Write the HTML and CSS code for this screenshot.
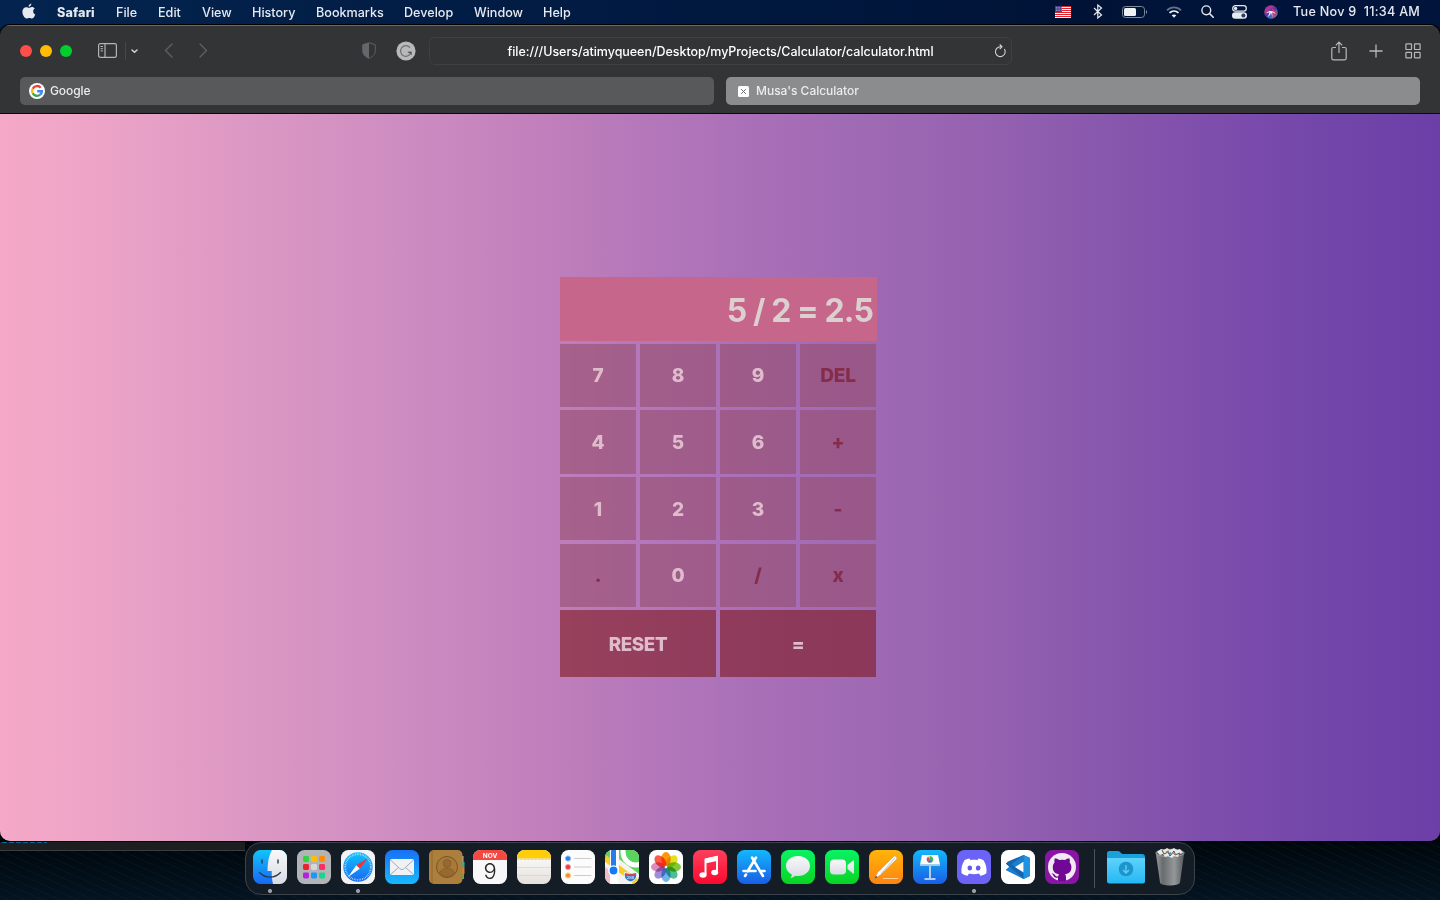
FILE: index.html
```html
<!DOCTYPE html>
<html lang="en">
<head>
<meta charset="utf-8">
<title>Musa's Calculator</title>
<link rel="stylesheet" href="styles.css">
</head>
<body>
<div class="desktop">
  <header class="menubar">
    <svg class="apple" width="14" height="18" viewBox="0 0 14 18"><path d="M9.3.4C9.5 2 8.1 3.8 6.6 3.8 6.4 2.3 7.7.7 9.3.4zM6.9 4.9c.8 0 1.7-.8 3-.8 1.2 0 2.3.6 2.9 1.5-2.4 1.4-2 4.9.5 5.9-.6 1.7-1.9 4-3.2 4-1 0-1.5-.6-2.8-.6s-1.8.6-2.8.6C2.700 15.500.4 12 .4 8.800.4 5.900 2.200 4.200 4.200 4.200c1.200 0 2.100.7 2.700.7z" fill="#e6eaf0"/></svg>
    <nav class="menus">
      <span class="app">Safari</span><span>File</span><span>Edit</span><span>View</span><span>History</span><span>Bookmarks</span><span>Develop</span><span>Window</span><span>Help</span>
    </nav>
    <div class="status">
      <svg width="16" height="12" viewBox="0 0 16 12"><path fill="#fff" d="M0 0h16v12H0z"/><path d="M0 .5h16M0 2.500h16M0 4.500h16M0 6.500h16M0 8.500h16M0 10.500h16" stroke="#dc2430" stroke-width="1.100"/><path fill="#43438b" d="M0 0h7v6H0z"/><path d="M1 1.500h6M1 3h6M1 4.500h6" stroke="#d5d5ef" stroke-width=".7" stroke-dasharray=".7 1"/></svg>
      <svg width="10" height="15" viewBox="0 0 10 15"><path d="M1 4l7.500 7-3.700 3V1l3.700 3L1 11" fill="none" stroke="#e6eaf0" stroke-width="1.200"/></svg>
      <svg width="26" height="12" viewBox="0 0 26 12"><rect x=".5" y=".5" width="22" height="11" rx="3" fill="none" stroke="#7d889c"/><rect x="2" y="2" width="12" height="8" rx="1.500" fill="#f0f2f5"/><path d="M24 4c1.600.6 1.600 3.400 0 4z" fill="#7d889c"/></svg>
      <svg width="16" height="12" viewBox="0 0 16 12"><path d="M1 4.300c4-4 10-4 14 0" fill="none" stroke="#63708a" stroke-width="1.800"/><path d="M3.500 6.900c2.600-2.500 6.400-2.500 9 0" fill="none" stroke="#f0f2f5" stroke-width="1.800"/><path d="M8 11.700 5.700 9.300c1.300-1.200 3.300-1.200 4.600 0z" fill="#f0f2f5"/></svg>
      <svg width="13" height="13" viewBox="0 0 13 13"><circle cx="5.300" cy="5.300" r="4.400" fill="none" stroke="#e6eaf0" stroke-width="1.400"/><path d="M8.500 8.500l3.700 3.700" stroke="#e6eaf0" stroke-width="1.600" stroke-linecap="round"/></svg>
      <svg width="15" height="14" viewBox="0 0 15 14"><rect x=".7" y=".7" width="13.600" height="5.400" rx="2.700" fill="none" stroke="#e6eaf0" stroke-width="1.200"/><circle cx="3.600" cy="3.400" r="1.700" fill="#e6eaf0"/><rect y="7.300" width="15" height="6.500" rx="3.250" fill="#e6eaf0"/><circle cx="11.400" cy="10.500" r="2" fill="#2b3e62"/></svg>
      <svg width="14" height="14" viewBox="0 0 14 14"><defs><linearGradient id="siri" x2=".8" y2="1"><stop stop-color="#244bb5"/><stop offset=".3" stop-color="#c2338f"/><stop offset=".55" stop-color="#4a3aa8"/><stop offset="1" stop-color="#18b2d8"/></linearGradient></defs><circle cx="7" cy="7" r="6.800" fill="url(#siri)"/><path d="M8 3.500c3 .5 4 3 5.300 4.500-.8 3-3 5-5 5.400z" fill="#e0355f" opacity=".75"/><path d="M1.500 8.500c2.500-2 3.500-2.500 5-2.500 1.500-.2 4 .3 5 3-2-1.200-2.500-1.500-3.500-1.500.5 1.500.5 3 .2 4.500C8 10.500 7.500 9 7 8c-.5 1.500-1.500 3-3.500 4 1-1.500 1.700-3 2-4.500-1 0-2 .2-4 1z" fill="#fff" opacity=".9"/></svg>
      <time>Tue Nov 9&nbsp; 11:34 AM</time>
    </div>
  </header>

  <main class="window">
    <div class="toolbar">
      <div class="tools-left">
        <div class="lights"><i class="red"></i><i class="yellow"></i><i class="green"></i></div>
        <svg width="19" height="15" viewBox="0 0 19 15"><rect x=".6" y=".6" width="17.800" height="13.800" rx="1.700" fill="none" stroke="#b3b4b5" stroke-width="1.200"/><path d="M7 1v13" stroke="#b3b4b5" stroke-width="1.200"/><path d="M2.500 3.500h2.500M2.500 5.700h2.500M2.500 7.900h2.500" stroke="#b3b4b5"/></svg>
        <i class="rule"></i>
        <svg class="down" width="7" height="5" viewBox="0 0 7 5"><path d="M1 1l2.500 2.300L6 1" fill="none" stroke="#d2d2d3" stroke-width="1.500" stroke-linecap="round"/></svg>
        <svg class="back" width="9" height="15" viewBox="0 0 9 15"><path d="M8 1L1.500 7.500 8 14" fill="none" stroke="#606163" stroke-width="1.300" stroke-linecap="round"/></svg>
        <svg class="fwd" width="9" height="15" viewBox="0 0 9 15"><path d="M1 1l6.500 6.500L1 14" fill="none" stroke="#606163" stroke-width="1.300" stroke-linecap="round"/></svg>
      </div>
      <div class="privacy">
        <svg width="14" height="17" viewBox="0 0 14 17"><path d="M7 .7l6.300 2v6c0 4-2.500 6-6.300 7.600C3.200 14.700.7 12.700.7 8.700v-6z" fill="none" stroke="#5e5f61"/><path d="M7 .7v15.600C3.200 14.700.7 12.700.7 8.700v-6z" fill="#66676a"/></svg>
        <svg width="20" height="20" viewBox="0 0 20 20"><circle cx="10" cy="10" r="9.600" fill="#b9b9ba"/><path d="M14 6.600A5.300 5.300 0 1 0 15 11.400h-3.200" fill="none" stroke="#707172" stroke-width="1.200"/><path d="M12 10.800h3.600v3.500z" fill="#555657"/></svg>
      </div>
      <div class="address"><span>file:///Users/atimyqueen/Desktop/myProjects/Calculator/calculator.html</span>
        <svg class="reload" width="13" height="14" viewBox="0 0 13 14"><path d="M10.400 5A4.900 4.900 0 1 1 6.300 2.800h1.500M5.700.5L8 2.800 5.700 5.200" fill="none" stroke="#d2d3d3" stroke-width="1.100"/></svg>
      </div>
      <div class="tools-right">
        <svg width="16" height="20" viewBox="0 0 16 20"><path d="M5 6.500H2.300A1.500 1.500 0 0 0 .8 8v9.300a1.500 1.500 0 0 0 1.500 1.500h11.400a1.500 1.500 0 0 0 1.500-1.500V8a1.500 1.500 0 0 0-1.500-1.500H11M8 12V1.200M4.800 4.300L8 1.100l3.200 3.200" fill="none" stroke="#b7b8b9" stroke-width="1.200"/></svg>
        <svg width="14" height="14" viewBox="0 0 14 14"><path d="M7 .5v13M.5 7h13" stroke="#b7b8b9" stroke-width="1.300"/></svg>
        <svg width="16" height="16" viewBox="0 0 16 16"><g fill="none" stroke="#b7b8b9" stroke-width="1.200"><rect x=".9" y=".9" width="5.600" height="5.600" rx=".6"/><rect x="9.500" y=".9" width="5.600" height="5.600" rx=".6"/><rect x=".9" y="9.300" width="5.600" height="5.600" rx=".6"/><rect x="9.500" y="9.300" width="5.600" height="5.600" rx=".6"/></g></svg>
      </div>
    </div>
    <div class="tabs">
      <div class="tab"><svg width="16" height="16" viewBox="0 0 16 16"><circle cx="8" cy="8" r="8" fill="#fff"/><g fill="none" stroke-width="2.400"><path d="M11.700 4.700A4.900 4.900 0 0 0 3.700 5.700" stroke="#ea4335"/><path d="M3.700 5.700a4.900 4.900 0 0 0 0 4.600" stroke="#fbbc05"/><path d="M3.700 10.300a4.900 4.900 0 0 0 7.500 1.400" stroke="#34a853"/><path d="M11.200 11.700A4.900 4.900 0 0 0 12.900 8.200H8.200" stroke="#4285f4"/></g></svg><span>Google</span></div>
      <div class="tab active"><svg width="11" height="11" viewBox="0 0 11 11"><rect width="11" height="11" rx="1.500" fill="#fff"/><path d="M3.200 3.200l4.600 4.600m0-4.600L3.200 7.800" stroke="#68696a"/></svg><span>Musa's Calculator</span></div>
    </div>
    <section class="page">
      <div class="calculator">
        <output class="display">5 / 2 = 2.5</output>
        <div class="keys">
          <button>7</button><button>8</button><button>9</button><button class="op">DEL</button>
          <button>4</button><button>5</button><button>6</button><button class="op">+</button>
          <button>1</button><button>2</button><button>3</button><button class="op">-</button>
          <button class="op">.</button><button>0</button><button class="op">/</button><button class="op">x</button>
          <button class="wide">RESET</button><button class="wide">=</button>
        </div>
      </div>
    </section>
  </main>

  <div class="shelf">
    <div class="behind"><i></i></div>
    <footer class="dock">
      <svg class="open" viewBox="0 0 34 34"><defs><linearGradient id="fb" x2="0" y2="1"><stop stop-color="#12c3fb"/><stop offset="1" stop-color="#1768f4"/></linearGradient><linearGradient id="lt" x2="0" y2="1"><stop stop-color="#f8f8fa"/><stop offset="1" stop-color="#dadce4"/></linearGradient></defs><rect width="34" height="34" rx="7.500" fill="url(#fb)"/><path d="M19 0h7.500A7.500 7.500 0 0 1 34 7.500v19a7.500 7.500 0 0 1-7.500 7.500H20c-1-4-1.400-8-1.300-13H14.500C14.700 12 16 5 19 0z" fill="url(#lt)"/><path d="M9 10v3M25 10v3" stroke="#27374c" stroke-width="1.400" stroke-linecap="round"/><path d="M6.500 22.500c6 6.200 15 6.200 21 0" fill="none" stroke="#26364b" stroke-width="1.300" stroke-linecap="round"/></svg>
      <svg viewBox="0 0 34 34"><rect width="34" height="34" rx="7.500" fill="#b3b4b8"/><g><rect x="6" y="6" width="6" height="6" rx="1.400" fill="#30d63a"/><rect x="14" y="6" width="6" height="6" rx="1.400" fill="#ffbd05"/><rect x="22" y="6" width="6" height="6" rx="1.400" fill="#fd8d07"/><rect x="6" y="14" width="6" height="6" rx="1.400" fill="#e92430"/><rect x="14" y="14" width="6" height="6" rx="1.400" fill="#d5d8dc"/><rect x="22" y="14" width="6" height="6" rx="1.400" fill="#fa2f61"/><rect x="6" y="22.500" width="6" height="6" rx="1.400" fill="#b025db"/><rect x="14" y="22.500" width="6" height="6" rx="1.400" fill="#1898fa"/><rect x="22" y="22.500" width="6" height="6" rx="1.400" fill="#18d58e"/></g></svg>
      <svg class="open" viewBox="0 0 34 34"><rect width="34" height="34" rx="7.500" fill="#f3f3f5"/><circle cx="17" cy="17" r="14.700" fill="url(#fb)"/><circle cx="17" cy="17" r="12.800" fill="none" stroke="#d3eeff" stroke-width="1.800" stroke-dasharray=".6 1.080"/><path d="M27 8L15.300 15.200l3.500 3.600z" fill="#ee3437"/><path d="M7 27l8.300-11.800 3.500 3.600z" fill="#f7f8fa"/></svg>
      <svg viewBox="0 0 34 34"><defs><linearGradient id="ml" x2="0" y2="1"><stop stop-color="#1870f4"/><stop offset="1" stop-color="#17baff"/></linearGradient></defs><rect width="34" height="34" rx="7.500" fill="url(#ml)"/><rect x="5" y="9" width="24" height="16" rx="1.800" fill="#eff1f5"/><path d="M5.500 10l9.200 8.500c1.500 1.400 3.100 1.400 4.600 0L28.500 10M5.500 24.500l8-7M28.500 24.500l-8-7" fill="none" stroke="#a1aab4" stroke-width="1"/></svg>
      <svg viewBox="0 0 34 34"><path d="M31 6h3.500v6H31z" fill="#a7b4aa"/><path d="M31 12h4.500v6H31z" fill="#2ab1a8"/><path d="M31 18h4.500v6H31z" fill="#e47d29"/><path d="M31 24h4v5h-4z" fill="#50ad61"/><rect width="33.500" height="34" rx="5" fill="#ad7f3c"/><path d="M3 1v32" stroke="#876027" stroke-width=".7"/><circle cx="18" cy="17" r="10.500" fill="#a97938" stroke="#78562b"/><circle cx="18" cy="13.500" r="3.900" fill="#98692e" stroke="#78562b" stroke-width=".6"/><path d="M10.500 23c2-6.500 13-6.500 15 0-4 5-11 5-15 0z" fill="#98692e" stroke="#78562b" stroke-width=".6"/></svg>
      <div class="calendar"><b>NOV</b><span>9</span></div>
      <svg viewBox="0 0 34 34"><defs><linearGradient id="paper" x2="0" y2="1"><stop stop-color="#fff"/><stop offset="1" stop-color="#e4e0da"/></linearGradient></defs><rect width="34" height="34" rx="7.500" fill="url(#paper)"/><path d="M0 8.500v-1A7.500 7.500 0 0 1 7.500 0h19A7.500 7.500 0 0 1 34 7.500v1z" fill="#ffce08"/><path d="M0 9.200h34" stroke="#b7af9b" stroke-dasharray=".7 .7"/><path d="M0 17.500h34M0 25.500h34" stroke="#cbc9c6" stroke-width=".5"/></svg>
      <svg viewBox="0 0 34 34"><rect width="34" height="34" rx="7.500" fill="#fcfcfc"/><g stroke-width="1"><circle cx="7" cy="8.500" r="2.600" fill="#237ff3" stroke="#8bbdf8"/><circle cx="7" cy="17" r="2.600" fill="#ee3b42" stroke="#f69ca0"/><circle cx="7" cy="25.500" r="2.600" fill="#f69326" stroke="#fac997"/></g><path d="M13 8.500h17.500M13 17h17.500M13 25.500h17.500" stroke="#b5b7ba" stroke-width=".7"/></svg>
      <svg viewBox="0 0 34 34"><defs><clipPath id="round"><rect width="34" height="34" rx="7.500"/></clipPath></defs><g clip-path="url(#round)"><path fill="#f5f3ee" d="M0 0h34v34H0z"/><path fill="#5bd35f" d="M14 0h20v24L14 9zM0 0h5v13L0 10z"/><path d="M0 8l34 26" stroke="#fdcb28" stroke-width="6"/><path d="M0 17l13 9v8H0z" fill="#f5b8c6"/><circle cx="31" cy="2" r="13" fill="none" stroke="#fff" stroke-width="5"/><path d="M13 0v34" stroke="#f9f9f9" stroke-width="2"/><path d="M8.500 0v34" stroke="#fff" stroke-width="7"/><path d="M8.500 0v20" stroke="#287ce9" stroke-width="5"/><circle cx="8.500" cy="20.500" r="5.300" fill="#fff"/><circle cx="8.500" cy="20.500" r="3.900" fill="#147bf4"/><path d="M19.500 22.500c3 1 9 1 12 0 1 5-1 8-6 9.500-5-1.500-7-4.500-6-9.500z" fill="#357ac7" stroke="#f6f6f6"/><path d="M20 23.500c3 1 8 1 11 0v2H20z" fill="#de4047"/><text x="25.500" y="29" text-anchor="middle" font-size="4" fill="#fff">280</text></g></svg>
      <svg viewBox="0 0 34 34"><rect width="34" height="34" rx="7.500" fill="#fff"/><g class="petals"><ellipse cx="17" cy="9" rx="4.700" ry="7" fill="#ff9708"/><ellipse cx="17" cy="9" rx="4.700" ry="7" fill="#e3df1c" transform="rotate(45 17 17)"/><ellipse cx="17" cy="9" rx="4.700" ry="7" fill="#80c93a" transform="rotate(90 17 17)"/><ellipse cx="17" cy="9" rx="4.700" ry="7" fill="#4fbf92" transform="rotate(135 17 17)"/><ellipse cx="17" cy="9" rx="4.700" ry="7" fill="#6db5ea" transform="rotate(180 17 17)"/><ellipse cx="17" cy="9" rx="4.700" ry="7" fill="#a08fd6" transform="rotate(225 17 17)"/><ellipse cx="17" cy="9" rx="4.700" ry="7" fill="#e08bbd" transform="rotate(270 17 17)"/><ellipse cx="17" cy="9" rx="4.700" ry="7" fill="#fb5a45" transform="rotate(315 17 17)"/></g></svg>
      <svg viewBox="0 0 34 34"><defs><linearGradient id="mu" x2="0" y2="1"><stop stop-color="#fb405e"/><stop offset="1" stop-color="#fb092e"/></linearGradient></defs><rect width="34" height="34" rx="7.500" fill="url(#mu)"/><path d="M12.500 24.500V9.500L24 7v15" fill="none" stroke="#fff" stroke-width="2"/><path d="M12 8.500L25 5.700v5L12 13.500z" fill="#fff"/><ellipse cx="10" cy="25" rx="3.600" ry="2.700" fill="#fff"/><ellipse cx="21.700" cy="22.500" rx="3.500" ry="2.700" fill="#fff"/></svg>
      <svg viewBox="0 0 34 34"><defs><linearGradient id="as" x2="0" y2="1"><stop stop-color="#13b8fb"/><stop offset="1" stop-color="#1a5de5"/></linearGradient></defs><rect width="34" height="34" rx="7.500" fill="url(#as)"/><path d="M15 7.500L26 26M19 7.500L10.500 21.500M6.500 21h12M23.500 21h4M9 24.500l-1 1.500" stroke="#fff" stroke-width="2.600" stroke-linecap="round"/></svg>
      <svg viewBox="0 0 34 34"><defs><linearGradient id="gr" x2="0" y2="1"><stop stop-color="#09f365"/><stop offset="1" stop-color="#08d422"/></linearGradient></defs><rect width="34" height="34" rx="7.500" fill="url(#gr)"/><path d="M17 6c7 0 12 4.400 12 10s-5 10-12 10c-1 0-2-.1-3-.3-1.200 1.400-3 2.100-4.700 2.100 1.100-1 1.500-2.100 1.500-3.300C7.300 22.700 5 19.700 5 16 5 10.400 10 6 17 6z" fill="url(#lt)"/></svg>
      <svg viewBox="0 0 34 34"><rect width="34" height="34" rx="7.500" fill="url(#gr)"/><rect x="5" y="9.500" width="16" height="15" rx="4" fill="url(#lt)"/><path d="M22.500 15l5.500-4.500q1-.6 1 .7v11.600q0 1.300-1 .7L22.500 19z" fill="url(#lt)"/></svg>
      <svg viewBox="0 0 34 34"><defs><linearGradient id="or" x2="0" y2="1"><stop stop-color="#ffb408"/><stop offset="1" stop-color="#ff8412"/></linearGradient></defs><rect width="34" height="34" rx="7.500" fill="url(#or)"/><path d="M5.500 28.800l3-6.300L24.500 6.500c1.500-1.500 4.500.8 3 3L11.500 25z" fill="#f8f8f6" stroke="#b9956b" stroke-width=".6"/><path d="M5.500 28.800l1.500-3 1.500 1.500z" fill="#574b44"/><path d="M12 24L26 8" stroke="#aaa6a0" stroke-width=".6"/><path d="M14 28.500h15" stroke="#ffd29b"/></svg>
      <svg viewBox="0 0 34 34"><rect width="34" height="34" rx="7.500" fill="url(#as)"/><path d="M9 5h16l2 9.500H7z" fill="#f9fbfd"/><path d="M7 14.500h20v1.300H7z" fill="#c9d5e3"/><path d="M17 16v12" stroke="#dae6f2" stroke-width="1.600"/><path d="M11.500 29h11" stroke="#f3f6f9" stroke-width="1.400"/><circle cx="17" cy="9.500" r="3.200" fill="#f7b42d"/><path d="M17 9.500V6.300a3.200 3.200 0 0 1 2.800 4.800z" fill="#30bd63"/><path d="M17 9.500l2.800 1.600a3.200 3.200 0 0 1-5.500.1z" fill="#347ded"/><path d="M17 9.500l-2.700 1.700A3.200 3.200 0 0 1 15 7z" fill="#ed454a"/></svg>
      <svg class="open" viewBox="0 0 34 34"><rect width="34" height="34" rx="7.500" fill="#6a63f5"/><path d="M12.500 8.500c-2 .3-4 1-5 1.700C5 14 4 18 4.600 23.300c2 1.500 4 2.300 6 2.500l1.400-2.200c3.300 1 6.700 1 10 0l1.400 2.200c2-.2 4-1 6-2.500C30 18 29 14 26.500 10.200c-1-.7-3-1.400-5-1.700l-.8 1.500c-2.400-.4-5-.4-7.400 0z" fill="#fff"/><ellipse cx="12.800" cy="18" rx="2.300" ry="2.600" fill="#625bed"/><ellipse cx="21.200" cy="18" rx="2.300" ry="2.600" fill="#625bed"/></svg>
      <svg viewBox="0 0 34 34"><rect width="34" height="34" rx="7.500" fill="#fff"/><path d="M22.500 5L29 8v18l-6.500 3L5 13.800 7 11.500z" fill="#1764ad"/><path d="M22.500 29L5 20.200v-1.500L22.500 5z" fill="#1b7fd0"/><path d="M5 13.800L7 11.800 23 23.500V29z" fill="#1564ae"/><path d="M8 17l-3-2.500v5z" fill="#fff"/><path d="M22.800 11.500L14 17l8.800 5.500z" fill="#fff"/><path d="M22.500 5l6.500 3v18l-6.500 3z" fill="#2191e2"/></svg>
      <svg viewBox="0 0 34 34"><rect width="34" height="34" rx="7.500" fill="#8914a6"/><circle cx="17" cy="17" r="14" fill="#f0eaf3"/><path d="M13 31v-3.500c-3 .7-4-.8-4.800-2.300-.4-.8-1-1.200-1.700-1.500 2-.7 3 .7 3.700 1.700.9 1.200 1.900 1.300 3 .8.1-.9.500-1.600 1-2-4-.5-6.400-2.500-6.400-7 0-2 .7-3.500 1.700-4.600-.3-1.500-.2-3 .3-4.300 1.600 0 3 .8 4.300 1.700a14 14 0 0 1 6 0c1.300-.9 2.700-1.700 4.300-1.700.5 1.300.6 2.800.3 4.300 1 1.100 1.700 2.600 1.700 4.600 0 4.500-2.500 6.500-6.500 7 .8.700 1.100 1.700 1.100 3V31z" fill="#710795"/></svg>
      <i class="divider"></i>
      <svg class="folder" viewBox="0 0 40 34"><defs><linearGradient id="fd" x2="0" y2="1"><stop stop-color="#60d2fb"/><stop offset="1" stop-color="#23b8f5"/></linearGradient></defs><path d="M1 3.500Q1 1 3.500 1H12q1.500 0 3 2l1.500 1H36q3 0 3 3v23H1z" fill="#19a1dd"/><path d="M1 8h38v23q0 2.500-2.500 2.500h-33Q1 33.500 1 31z" fill="url(#fd)"/><circle cx="20" cy="19" r="7.300" fill="#1c94cc"/><path d="M20 15v8m-3-3l3 3 3-3" fill="none" stroke="#65d0f6" stroke-width="1.300"/></svg>
      <svg class="trash" viewBox="0 0 30 38"><defs><linearGradient id="tr"><stop stop-color="#96999a"/><stop offset=".25" stop-color="#686c6e"/><stop offset=".65" stop-color="#94989a"/><stop offset="1" stop-color="#56595b"/></linearGradient></defs><path d="M.8 5L5 34.500c.4 4 19.600 4 20 0L29.200 5z" fill="url(#tr)"/><ellipse cx="15" cy="5" rx="14.200" ry="3.700" fill="#54585a" stroke="#9ca0a1"/><path d="M2 4l4-3 3 1 3-2 3 2 4-2 3 2 3-1 3 4-4 1-1 3-4-1-2 2-4-2-3 1-2-3-3 1z" fill="#e8eae9"/><path d="M7 2l2 4 4-2 2 4 4-5 1 4 5-2" fill="none" stroke="#444b50"/><path d="M11 4l3-1M18 5l3 1" stroke="#e17d32" stroke-width="1.500"/><path d="M14 6l2-1" stroke="#2498d8" stroke-width="2"/></svg>
    </footer>
  </div>
</div>
</body>
</html>
```
FILE: styles.css
```css
* { box-sizing: border-box; }
body { margin: 0; font-family: Inter, "Liberation Sans", sans-serif; }
svg { display: block; flex: none; }
.desktop {
  display: flex; flex-direction: column; width: 1440px; height: 900px; overflow: hidden;
  background: linear-gradient(90deg, #03244f, #001337 75%, #00143c) 0 0 / 100% 40px no-repeat, linear-gradient(#00060b 840px, #041421 900px);
}
.menubar { display: flex; height: 25px; align-items: center; padding-left: 22px; color: #e6eaf0; font-size: 12.6px; font-weight: 500; white-space: nowrap; }
.apple { margin-top: -1px; }
.menus { display: grid; grid-template-columns: 59px 42px 44px 50px 64px 88px 70px 69px 40px; margin-left: 21px; }
.app { font-weight: 800; letter-spacing: .15px; }
.status { display: flex; align-items: center; margin-left: auto; padding-right: 19px; }
.status svg:nth-child(1) { margin-right: 22px; }
.status svg:nth-child(2) { margin-right: 19px; }
.status svg:nth-child(3) { margin-right: 18px; }
.status svg:nth-child(4) { margin-right: 19px; }
.status svg:nth-child(5) { margin-right: 18px; }
.status svg:nth-child(6) { margin-right: 17px; }
.status svg:nth-child(7) { margin-right: 16px; }
.status svg { position: relative; left: 1px; top: -1px; }
.status time { width: 128px; letter-spacing: .27px; margin-top: -2px; }

.window { display: flex; flex-direction: column; flex: none; height: 816px; overflow: hidden; border-radius: 10px; background: #333436; box-shadow: 0 0 0 1px #000; }
.toolbar { display: grid; grid-template-columns: 341px 67px 583px 1fr; height: 52px; padding: 0 0 2px 21px; border-top: 1px solid #68696b; align-items: center; }
.tools-left, .privacy, .tools-right, .lights { display: flex; align-items: center; }
.lights { gap: 8px; margin: 0 26px 0 -1px; }
.lights i { width: 12px; height: 12px; border-radius: 50%; }
.red { background: #ff4d48; }
.yellow { background: #ffbc00; }
.green { background: #00cf2d; }
.rule { width: 1px; height: 18px; background: #47484a; margin-left: 8px; }
.down { margin-left: 5px; margin-top: 1px; }
.back { margin-left: 26px; }
.fwd { margin-left: 26px; }
.privacy { gap: 20px; padding-left: 0; }
.address { position: relative; display: flex; align-items: center; justify-content: center; height: 28px; border: 1px solid #3f4042; border-radius: 6px; color: #fff; font-size: 12.5px; font-weight: 500; letter-spacing: -.04px; white-space: nowrap; }
.address span { margin-top: 1px; }
.reload { position: absolute; right: 4px; top: 6px; }
.tools-right { justify-content: flex-end; gap: 22px; padding-right: 19px; }
.tabs { display: flex; gap: 12px; padding: 0 20px; height: 36px; }
.tab { display: flex; align-items: center; flex: none; width: 694px; height: 28px; padding-left: 9px; gap: 5px; border-radius: 5px; background: #58595b; color: #ececed; font-size: 12px; font-weight: 500; letter-spacing: -.1px; }
.tab span { margin-top: -1px; }
.tab.active { background: #8b8c8e; padding-left: 12px; gap: 7px; letter-spacing: -.02px; }
.page {
  flex: 1; border-top: 1px solid #0a0a0a; padding: 163px 0 0 560px;
  background: linear-gradient(90deg, #f5a8c8 0, #f0a6c7 60px, #dc98c4 250px, #cf8ec1 385px, #c07fbb 550px, #b376ba 660px, #a86fb7 760px, #9e68b3 880px, #9461b0 1000px, #8757ad 1110px, #7e4eac 1210px, #7346aa 1320px, #6b3fa7 1440px);
}
.calculator { width: 317px; }
.display { display: flex; align-items: center; justify-content: flex-end; height: 64px; padding: 2px 4px 0 0; background: #c5668a; color: #dccfd0; font-size: 32px; font-weight: 700; letter-spacing: -.9px; }
.keys { display: grid; grid-template-columns: repeat(4, 76px); grid-template-rows: repeat(4, 63.4px) 66.7px; gap: 3.25px 4px; padding-top: 2.7px; }
.keys button { border: 0; padding: 1px 0 0; background: rgba(148, 76, 103, .57); color: #dfbccb; font: 800 19px Inter, sans-serif; }
.keys .op { color: #852c4a; letter-spacing: -.2px; }
.keys .wide { grid-column: span 2; padding-top: 2px; background: rgba(124, 20, 24, .58); font-size: 18.8px; letter-spacing: -.4px; }

.shelf { display: flex; height: 59px; background: repeating-linear-gradient(24deg, transparent 0 3px, rgba(20, 64, 88, .14) 3px 4px, transparent 4px 7px); }
.behind { width: 245px; height: 10px; background: #1d1e20; border-top: 1px solid #000; border-bottom: 1px solid #3c3d3f; }
.behind i { display: block; width: 45px; height: 1px; margin-left: 2px; background: repeating-linear-gradient(90deg, #086796 0 5px, #14212a 5px 7px); }
.dock { display: flex; align-items: flex-start; gap: 10px; width: 950px; height: 53px; margin-top: 1px; padding: 7px 7px 0; border: 1px solid #3b424a; border-radius: 16px; background: #141c26; }
.dock > svg { width: 34px; height: 34px; overflow: visible; }
.dock > .open { height: 44px; padding-bottom: 10px; background: radial-gradient(circle at 17px 41px, #969da5 0 1.8px, transparent 2.3px); }
.petals { isolation: isolate; }
.petals ellipse { mix-blend-mode: multiply; }
.calendar { display: flex; flex: none; flex-direction: column; align-items: center; width: 34px; height: 34px; overflow: hidden; border-radius: 7.5px; background: #f8f8f8; }
.calendar b { width: 100%; height: 10px; background: #f44842; color: #fff; font-size: 6.5px; line-height: 12px; text-align: center; }
.calendar span { color: #27272a; font-size: 22px; font-weight: 300; line-height: 23px; }
.divider { width: 1px; height: 39px; margin: -1px 1px 0 5px; background: #49515b; }
.dock > .folder { width: 40px; }
.dock > .trash { width: 30px; height: 38px; margin: -2px 0 0 -1px; }
```
